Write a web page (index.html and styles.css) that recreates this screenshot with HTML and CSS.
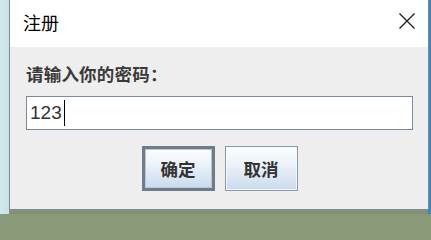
FILE: index.html
```html
<!DOCTYPE html>
<html lang="zh">
<head>
<meta charset="utf-8">
<title>注册</title>
<link rel="stylesheet" href="styles.css">
</head>
<body>
<div class="desktop">
  <div class="window">
    <div class="titlebar">
      <span class="title">注册</span>
      <svg class="close" width="16" height="16" viewBox="0 0 16 16">
        <path d="M0.5 0.5 L15.5 15.5 M15.5 0.5 L0.5 15.5" stroke="#1a1a1a" stroke-width="1.3" fill="none"/>
      </svg>
    </div>
    <div class="content">
      <div class="label">请输入你的密码：</div>
      <div class="field"><span class="value">123</span><span class="caret"></span></div>
      <div class="buttons">
        <div class="btn focused">确定</div>
        <div class="btn">取消</div>
      </div>
    </div>
  </div>
</div>
</body>
</html>
```
FILE: styles.css
```css
html, body {
  margin: 0;
  padding: 0;
  background: #8a9a78;
}
body {
  width: 431px;
  height: 214px;
  overflow: hidden;
}
.desktop {
  width: 431px;
  height: 214px;
  background:
    linear-gradient(to right, #d2e8eb 0, #c9e2e6 9px, transparent 9px),
    linear-gradient(to right, transparent 428px, #3a84c4 428px),
    linear-gradient(to bottom, #cfe4e8 0, #cfe4e8 150px, #b9c8c2 180px, #7f8f6a 214px);
  position: relative;
}
.window {
  position: absolute;
  left: 9px;
  top: 0;
  width: 418px;
  height: 209px;
  border: 1px solid #7f8b96;
  border-top: none;
  background: #eeeeee;
  display: flex;
  flex-direction: column;
  font-family: "Noto Sans CJK SC", "Noto Sans", sans-serif;
}
.titlebar {
  height: 47px;
  background: #ffffff;
  display: flex;
  align-items: center;
  justify-content: space-between;
  padding: 0 13px 0 13px;
}
.title {
  font-size: 18px;
  color: #000;
  line-height: 20px;
  margin-top: -3px;
}
.close {
  display: block;
  margin-top: -6px;
}
.content {
  flex: 1;
  display: flex;
  flex-direction: column;
  padding: 17px 15px 0 16px;
}
.label {
  font-size: 17.5px;
  line-height: 20px;
  font-weight: 700;
  color: #3a3a3a;
  letter-spacing: 0.2px;
}
.field {
  margin-top: 12px;
  height: 32px;
  background: #fff;
  border: 1px solid #7a8a9a;
  display: flex;
  align-items: center;
  padding-left: 3px;
}
.value {
  font-family: "Liberation Sans", Arial, sans-serif;
  font-size: 19px;
  color: #333;
  line-height: 22px;
}
.caret {
  width: 1px;
  height: 26px;
  background: #000;
  margin-left: 2px;
}
.buttons {
  display: flex;
  justify-content: center;
  gap: 10px;
  margin-top: 16px;
}
.btn {
  width: 71px;
  height: 43px;
  box-sizing: content-box;
  border: 1px solid #8b9aaa;
  box-shadow: inset 0 0 0 1px #f6f9fc;
  background: linear-gradient(to bottom, #fdfeff 0%, #eef4fa 35%, #c9dbee 100%);
  display: flex;
  align-items: center;
  justify-content: center;
  font-size: 17.5px;
  font-weight: 700;
  color: #333;
}
.btn.focused {
  border: 3px solid #6f7d8b;
  width: 67px;
  height: 39px;
  box-shadow: inset 0 0 0 1px #b9c6d3;
}
```
